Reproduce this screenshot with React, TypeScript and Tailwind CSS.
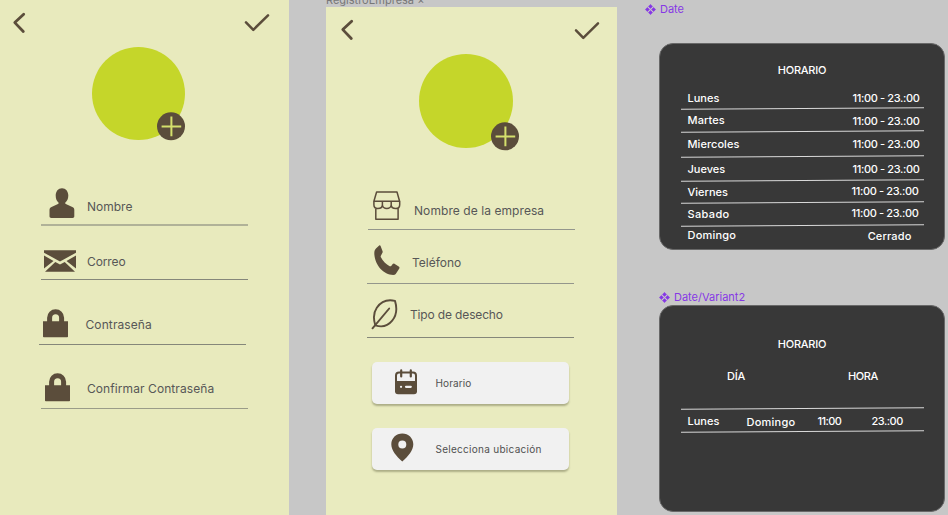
import type { ReactNode } from "react";

const INK = "#5b4d3b";

function BackIcon({ className }: { className: string }) {
  return (
    <svg className={className} width="14" height="22" viewBox="0 0 14 22" fill="none">
      <path d="M11.700 2.200 2.800 10.600 11.300 19.500" stroke={INK} strokeWidth="2.800" strokeLinecap="round" strokeLinejoin="round" />
    </svg>
  );
}

function CheckIcon({ className }: { className: string }) {
  return (
    <svg className={className} width="26" height="19" viewBox="0 0 26 19" fill="none">
      <path d="M2 9.400 9.300 16.800 24 2.400" stroke={INK} strokeWidth="2.500" strokeLinecap="round" strokeLinejoin="round" />
    </svg>
  );
}

function Avatar({ className, badge }: { className: string; badge: string }) {
  return (
    <div className={`relative rounded-full bg-[#c5d62a] ${className}`}>
      <svg className={`absolute ${badge}`} width="28" height="29" viewBox="0 0 28 29">
        <circle cx="14" cy="14.300" r="14" fill={INK} />
        <path d="M14.400 4.500v19.800M4.600 14.500h19.600" stroke="#d4e06c" strokeWidth="2" />
      </svg>
    </div>
  );
}

function PersonIcon() {
  return (
    <svg width="26" height="31" viewBox="0 0 26 31" fill={INK}>
      <path d="M13 .2c3.800 0 6.300 3.200 6.300 7.300 0 3.200-1.200 5.600-3 7v1.200l7 3.300c1.300.6 2 1.400 2 3v6.200c0 1.100-.6 1.700-1.700 1.700H2.300C1.200 29.900.5 29.300.5 28.200V22c0-1.600.8-2.400 2-3l7-3.300v-1.200c-1.800-1.400-2.800-3.800-2.800-7C6.700 3.400 9.200.2 13 .2Z" />
    </svg>
  );
}

function MailIcon() {
  return (
    <svg width="32" height="23" viewBox="0 0 32 23" fill={INK}>
      <path d="M0 .3h32v2.400L16 11.500 0 2.700Z" />
      <path d="M0 5.500 9.500 11 0 18.500ZM32 5.500V18.500L22.500 11Z" />
      <path d="m11.300 12 4.700 2.600 4.700-2.600L31 21.700H1Z" />
    </svg>
  );
}

function LockIcon() {
  return (
    <svg width="25" height="29" viewBox="0 0 25 29">
      <path d="M6.600 13.500V8.700a6 6 0 0 1 12 0v4.800" fill="none" stroke={INK} strokeWidth="5" />
      <path d="M0 12.300h25v15.200a.8.800 0 0 1-.8.800H.8a.8.800 0 0 1-.8-.8Z" fill={INK} />
    </svg>
  );
}

function StoreIcon() {
  return (
    <svg width="28" height="30" viewBox="0 0 28 30" fill="none" stroke={INK} strokeWidth="1.500" strokeLinejoin="round">
      <path d="M3.600 1h20.400l2.600 9.300H.9L3.600 1Z" />
      <path d="M.9 10.300v3.400c0 2.200 1.600 3.800 3.900 3.800 2.700 0 4.600-1.600 4.600-3.800 0 2.200 2 3.800 4.400 3.800s4.400-1.600 4.400-3.800c0 2.200 1.900 3.800 4.600 3.800 2.300 0 3.900-1.600 3.900-3.800v-3.400M9.400 10.300v3.400M18.200 10.300v3.400M2.800 17v11.300h22.300V17" />
    </svg>
  );
}

function PhoneIcon() {
  return (
    <svg width="26" height="31" viewBox="0 0 26 31" fill={INK}>
      <path d="M5.200.4c.5-.4 1-.2 1.300.4l2.100 5.400c.2.700.1 1.300-.3 1.900L7 10.500c-.4.600-.4 1.100-.1 1.700 2 3.800 5.100 7 8.800 9 .6.300 1.100.2 1.500-.3l1.500-1.800c.5-.6 1.100-.7 1.700-.4l4.300 2.800c.8.500 1 1.100.6 1.900L21.900 28.800c-.6.900-1.400 1.100-2.600 1.100C9.400 29.900.3 19.500.3 7.900c0-2 .7-3.300 1.900-4.600Z" />
    </svg>
  );
}

function LeafIcon() {
  return (
    <svg width="27" height="31" viewBox="0 0 27 31" fill="none" stroke={INK} strokeWidth="1.900" strokeLinecap="round" strokeLinejoin="round">
      <path d="M1.500 29.300 18.200 9.500" />
      <path d="M4.300 26.300C2.600 21 2.200 14 5.800 8.800 9.800 2.900 16.600.2 24 1.900c2.200 7.200 1.500 14.500-2.800 19.700-4 4.900-10.200 7-16.900 4.700Z" />
    </svg>
  );
}

function CalendarIcon() {
  return (
    <svg className="ml-[23px] -mt-[2px]" width="22" height="26" viewBox="0 0 22 26">
      <path d="M4 3.600h14a3 3 0 0 1 3 3V13H1V6.600a3 3 0 0 1 3-3Z" fill="none" stroke={INK} strokeWidth="2" />
      <path d="M0 12h22v10.200a3 3 0 0 1-3 3H3a3 3 0 0 1-3-3Z" fill={INK} />
      <path d="M6.200 1.400v6M15.800 1.400v6" stroke={INK} strokeWidth="2.200" strokeLinecap="round" />
      <path d="M6 17.800h.1M11 17.800h4.800" stroke="#f1f1f1" strokeWidth="2.200" strokeLinecap="round" />
    </svg>
  );
}

function PinIcon() {
  return (
    <svg className="ml-[19px] -mt-[3px]" width="23" height="29" viewBox="0 0 23 29" fill={INK}>
      <path fillRule="evenodd" d="M11.300.5c6.100 0 11 4.700 11 10.800 0 6.200-5 12-11 17.200C5.300 23.300.3 17.500.3 11.300.3 5.200 5.200.5 11.300.5Zm0 7a4 4 0 1 0 0 8 4 4 0 0 0 0-8Z" />
    </svg>
  );
}

function VariantIcon() {
  return (
    <svg className="mr-1 shrink-0" width="11" height="11" viewBox="0 0 11 11" fill="#8638e5" stroke="#8638e5" strokeWidth="0.600" strokeLinejoin="round">
      <path d="m5.500.4 2 2-2 2-2-2ZM5.500 6.600l2 2-2 2-2-2ZM2.400 3.500l2 2-2 2-2-2ZM8.600 3.500l2 2-2 2-2-2Z" />
    </svg>
  );
}

type FieldProps = { row: string; iconBox: string; text: string; label: string; icon: ReactNode };

function Field({ row, iconBox, text, label, icon }: FieldProps) {
  return (
    <div className={`flex w-[207px] items-start ${row}`}>
      <div className={`shrink-0 ${iconBox}`}>{icon}</div>
      <span className={`text-[12px] leading-4 text-[#575757] ${text}`}>{label}</span>
    </div>
  );
}

function ActionButton({ icon, label, text }: { icon: ReactNode; label: string; text: string }) {
  return (
    <button className="flex h-[42px] w-[197px] items-center rounded-[5px] bg-[#f1f1f1] shadow-[0_2px_2px_rgba(60,60,30,0.35)]">
      <span className="w-[64px] shrink-0">{icon}</span>
      <span className={`text-[10px] leading-4 text-[#505050] ${text}`}>{label}</span>
    </button>
  );
}

function Divider() {
  return <div className="h-px w-[243px] -rotate-[0.3deg] bg-[#d8d8d8]" />;
}

const schedule = [
  { day: "Lunes", time: "11:00 - 23.:00", row: "h-[22px]", left: "mt-1", right: "mt-1 mr-1 tracking-[-0.35px]" },
  { day: "Martes", time: "11:00 - 23.:00", row: "h-[22px]", left: "mt-[3px] tracking-[0.1px]", right: "mt-1 mr-1 tracking-[-0.35px]" },
  { day: "Miercoles", time: "11:00 - 23.:00", row: "h-[24px]", left: "mt-1 tracking-[0.05px]", right: "mt-1 mr-1 tracking-[-0.35px]" },
  { day: "Jueves", time: "11:00 - 23.:00", row: "h-[23px]", left: "mt-1", right: "mt-1 mr-1 tracking-[-0.35px]" },
  { day: "Viernes", time: "11:00 - 23.:00", row: "h-[21px]", left: "mt-[3px]", right: "mt-[2px] mr-[5px] tracking-[-0.35px]" },
  { day: "Sabado", time: "11:00 - 23.:00", row: "h-[22px]", left: "mt-[3px] tracking-[0.35px]", right: "mt-[2px] mr-[5px] tracking-[-0.35px]" },
  { day: "Domingo", time: "Cerrado", row: "h-[22px]", left: "mt-px tracking-[0.2px]", right: "mt-[2px] mr-3 tracking-[0.15px]" },
];

export default function App() {
  return (
    <div className="flex h-[515px] w-[948px] overflow-hidden whitespace-nowrap bg-[#c7c7c7] font-['Inter','Liberation_Sans',sans-serif]">
      <section className="h-full w-[289px] shrink-0 bg-[#e8eabd]">
        <div className="flex h-[47px] items-start justify-between pl-3 pr-[19px]">
          <BackIcon className="mt-3" />
          <CheckIcon className="mt-[13px]" />
        </div>
        <Avatar className="ml-[92px] h-[93px] w-[93px]" badge="left-[65px] top-[65px]" />
        <Field row="ml-[41px] h-[86px] border-b-2 border-[#b0b298]" iconBox="w-[46px] pl-2 pt-[48px]" text="mt-[59px]" label="Nombre" icon={<PersonIcon />} />
        <Field row="ml-[41px] h-[54px] border-b border-[#85877a]" iconBox="w-[46px] pl-[3px] pt-[24px]" text="mt-[28px] tracking-[-0.1px]" label="Correo" icon={<MailIcon />} />
        <Field row="ml-[39px] h-[65px] border-b border-[#85877a]" iconBox="w-[46px] pl-1 pt-[29px]" text="ml-[0.500px] mt-[37px] tracking-[0.1px]" label="Contraseña" icon={<LockIcon />} />
        <Field row="ml-[41px] h-[64px] border-b border-[#9a9c88]" iconBox="w-[46px] pl-1 pt-[28px]" text="mt-[36px] tracking-[0.08px]" label="Confirmar Contraseña" icon={<LockIcon />} />
      </section>

      <section className="ml-[37px] flex w-[291px] shrink-0 flex-col">
        <div className="flex h-[7px] items-end">
          <span className="text-[11px] leading-[14px] text-[#777]">RegistroEmpresa ×</span>
        </div>
        <div className="flex-1 bg-[#e9ebbf]">
          <div className="flex h-[47px] items-start justify-between pl-[14px] pr-[17px]">
            <BackIcon className="mt-3" />
            <CheckIcon className="mt-[14px]" />
          </div>
          <Avatar className="ml-[93px] h-[94px] w-[94px]" badge="left-[72px] top-[68px]" />
          <Field row="ml-[42px] h-[82px] border-b border-[#94968c]" iconBox="w-[46px] pl-[5px] pt-[43px]" text="mt-[55px] tracking-[0.07px]" label="Nombre de la empresa" icon={<StoreIcon />} />
          <Field row="ml-[41px] h-[54px] border-b border-[#94968c]" iconBox="w-[45px] pl-[7px] pt-[15px]" text="mt-[25px]" label="Teléfono" icon={<PhoneIcon />} />
          <Field row="ml-[41px] h-[54px] border-b border-[#85877a]" iconBox="w-[43px] pl-1 pt-[15px]" text="mt-[23px] tracking-[-0.15px]" label="Tipo de desecho" icon={<LeafIcon />} />
          <div className="ml-[45.500px] mt-[24px] flex flex-col gap-6">
            <ActionButton icon={<CalendarIcon />} label="Horario" text="tracking-[0.1px]" />
            <ActionButton icon={<PinIcon />} label="Selecciona ubicación" text="tracking-[0.28px]" />
          </div>
        </div>
      </section>

      <section className="ml-[28px] w-[303px] shrink-0">
        <div className="flex h-[43px] items-start pt-[3px] text-[11px] leading-[13px] text-[#8638e5]">
          <div className="flex h-3 items-center"><VariantIcon /><span>Date</span></div>
        </div>
        <div className="ml-[14px] h-[207px] w-[286px] rounded-[14px] border border-[#686868] bg-[#383838] text-[11px] font-medium leading-4 text-white">
          <h2 className="pt-[18px] text-center tracking-[-0.25px]">HORARIO</h2>
          <div className="ml-[20.500px] mt-[8px] w-[243px]">
            {schedule.map((item, i) => (
              <div key={item.day}>
                <div className={`flex items-start justify-between pl-[7px] ${item.row}`}>
                  <span className={item.left}>{item.day}</span>
                  <span className={item.right}>{item.time}</span>
                </div>
                {i < schedule.length - 1 && <Divider />}
              </div>
            ))}
          </div>
        </div>

        <div className="ml-[14px] mt-[40px] flex h-[14px] items-center text-[11px] leading-[13px] text-[#8638e5]">
          <VariantIcon /><span>Date/Variant2</span>
        </div>
        <div className="ml-[14px] mt-px h-[207px] w-[286px] rounded-[14px] border border-[#686868] bg-[#383838] text-[11px] font-medium leading-4 text-white">
          <h2 className="pt-[30px] text-center tracking-[-0.25px]">HORARIO</h2>
          <div className="mt-4 flex h-[40px] pl-[67px]">
            <span className="w-[121px] tracking-[-0.25px]">DÍA</span>
            <span className="tracking-[-0.4px]">HORA</span>
          </div>
          <div className="ml-[20.500px] w-[243px]">
            <Divider />
            <div className="flex h-[22px] items-start pl-[7px] pt-[4px]">
              <span className="w-[59px]">Lunes</span>
              <span className="mt-px w-[71px] tracking-[0.25px]">Domingo</span>
              <span className="w-[54px] tracking-[-0.55px]">11:00</span>
              <span className="tracking-[-0.500px]">23.:00</span>
            </div>
            <Divider />
          </div>
        </div>
      </section>
    </div>
  );
}
